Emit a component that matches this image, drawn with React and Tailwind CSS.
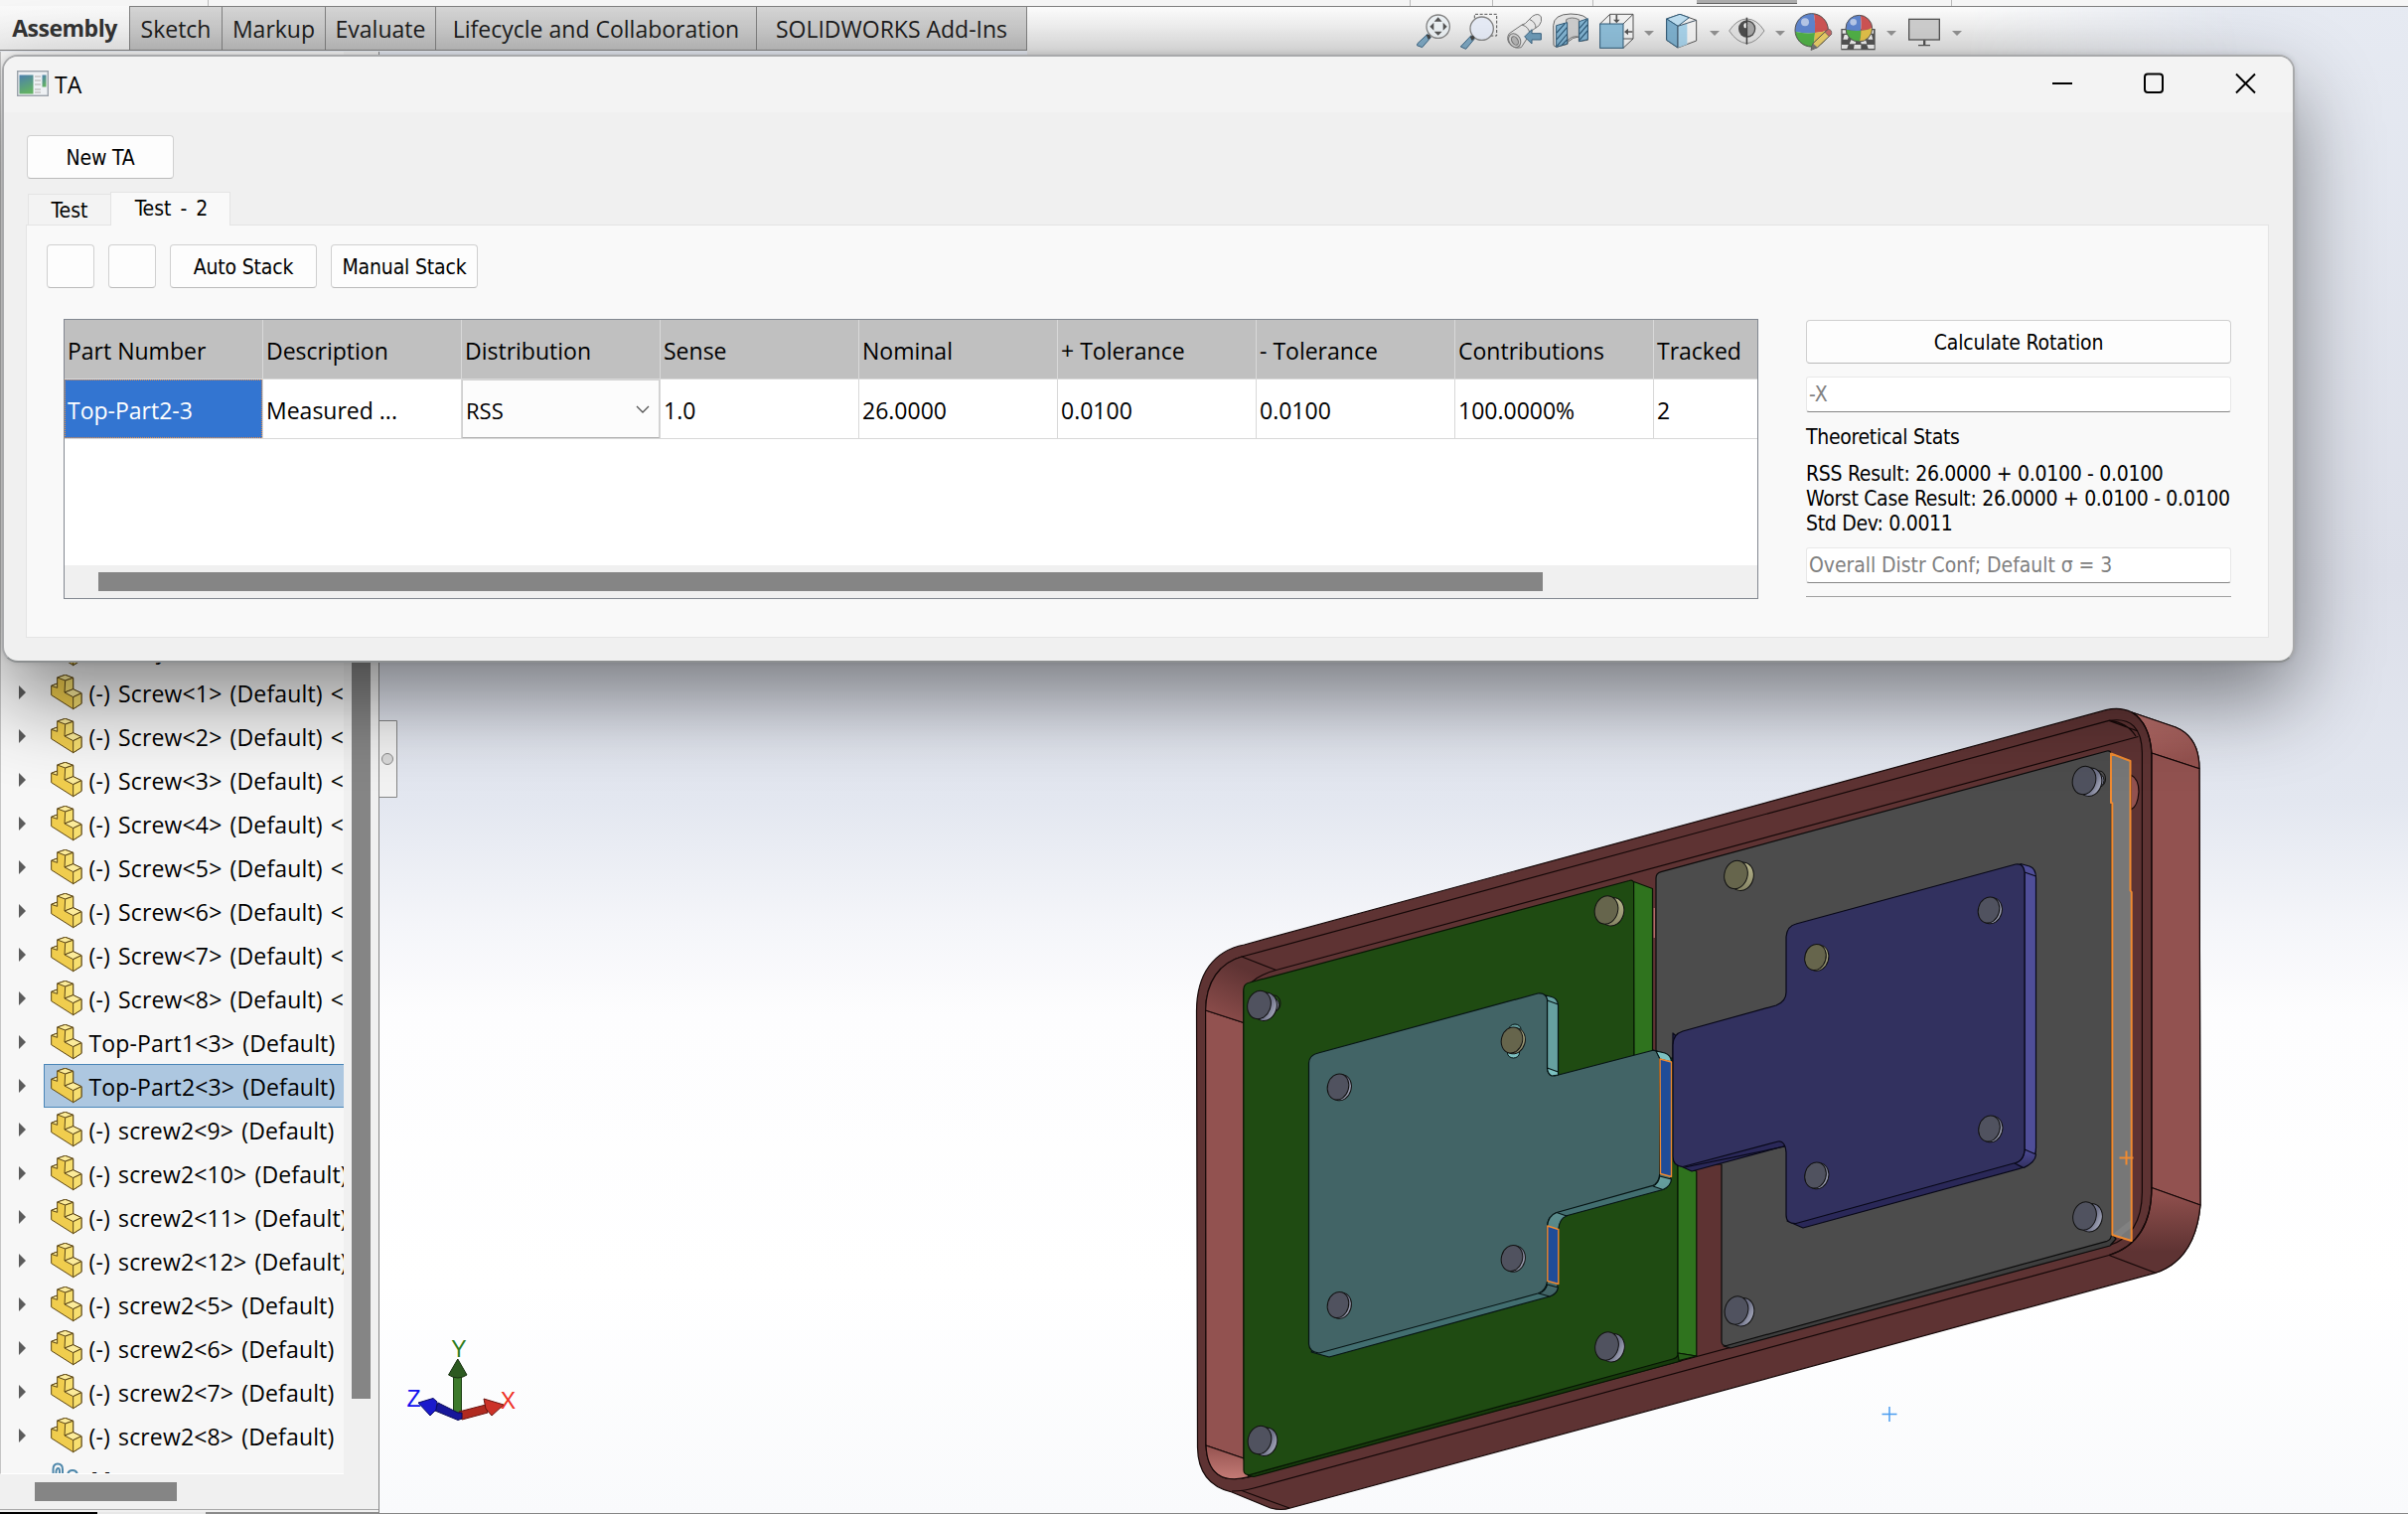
const SEGOE = "font-['Open_Sans','Noto_Sans',sans-serif]";
const TAHOMA = "font-['DejaVu_Sans_Condensed','DejaVu_Sans',sans-serif]";

const TREE = [
  "Battery<1> (Default)",
  "(-) Screw<1> (Default) <",
  "(-) Screw<2> (Default) <",
  "(-) Screw<3> (Default) <",
  "(-) Screw<4> (Default) <",
  "(-) Screw<5> (Default) <",
  "(-) Screw<6> (Default) <",
  "(-) Screw<7> (Default) <",
  "(-) Screw<8> (Default) <",
  "Top-Part1<3> (Default)",
  "Top-Part2<3> (Default)",
  "(-) screw2<9> (Default)",
  "(-) screw2<10> (Default)",
  "(-) screw2<11> (Default)",
  "(-) screw2<12> (Default)",
  "(-) screw2<5> (Default)",
  "(-) screw2<6> (Default)",
  "(-) screw2<7> (Default)",
  "(-) screw2<8> (Default)",
];

const COLUMNS = [
  ["Part Number", "Top-Part2-3"],
  ["Description", "Measured ..."],
  ["Distribution", "RSS"],
  ["Sense", "1.0"],
  ["Nominal", "26.0000"],
  ["+ Tolerance", "0.0100"],
  ["- Tolerance", "0.0100"],
  ["Contributions", "100.0000%"],
  ["Tracked", "2"],
];

function PartIcon() {
  return (
    <svg className="h-[36px] w-[32px] shrink-0" viewBox="0 0 96 108" strokeLinejoin="round" stroke="#5c4616" strokeWidth="3">
      <path d="M2 34 L20 27 L20 9 L44 1 L68 10 L68 44 L93 56 L93 88 L68 104 L2 62 Z" fill="#f0cd4e" />
      <path d="M20 9 L44 1 L68 10 L44 18 Z" fill="#fbeb9a" />
      <path d="M44 18 L68 10 L68 44 L42 54 Z" fill="#f7df70" />
      <path d="M42 54 L68 44 L93 56 L68 68 Z" fill="#fbeb9a" />
      <path d="M68 68 L93 56 L93 88 L68 104 Z" fill="#f7df70" />
      <path d="M2 34 L20 27 L20 40 Z" fill="#fbeb9a" />
    </svg>
  );
}

function TreeRow({ label, selected }) {
  return (
    <li className="flex h-[44px] items-stretch">
      <div className="flex w-[43px] shrink-0 items-center pb-px pl-[18px]">
        <svg className="h-[14px] w-[7px]" viewBox="0 0 7 14"><path d="M0 0 L7 7 L0 14 Z" fill="#5c5c5c" /></svg>
      </div>
      <div className={selected
        ? "flex flex-1 items-center border border-r-0 border-[#4a86b8] bg-[#adc7e0] pl-[6px]"
        : "flex flex-1 items-center pl-[7px]"}>
        <PartIcon />
        <span className="ml-[6.500px] pt-[2px] text-[23px] leading-[32px] tracking-[0.15px] [word-spacing:2px] whitespace-pre text-black">{label}</span>
      </div>
    </li>
  );
}

function Caret({ className }) {
  return (
    <svg className={"mt-[18px] h-[5px] w-[10px] shrink-0 " + className} viewBox="0 0 10 5"><path d="M0 0 H10 L5 5 Z" fill="#939393" /></svg>
  );
}

function ViewToolbar() {
  return (
    <div className="flex items-start pt-[6px]">
      <svg className="h-[38px] w-[34px] shrink-0" viewBox="33 40 102 114">
        <path d="M66 104 L76 114 L50 144 L34 138 L36 132 Z" fill="#7fa9c4" stroke="#3d6684" strokeWidth="3" />
        <circle cx="98" cy="81" r="35" fill="#eef3f6" stroke="#858585" strokeWidth="4" />
        <path d="M98 53 L110 66 H86 Z M98 108 L110 96 H86 Z M73 81 L85 69 V93 Z M125 81 L113 69 V93 Z" fill="#555" />
        <path d="M62 106 L72 106 L76 114 L68 120 Z" fill="#444" />
      </svg>
      <svg className="ml-[10px] h-[38px] w-[38px] shrink-0" viewBox="165 40 114 114">
        <path d="M208 70 V44 H275 V109 H240" fill="none" stroke="#555" strokeWidth="3" strokeDasharray="9 5" />
        <path d="M198 108 L208 118 L182 149 L166 142 Z" fill="#7fa9c4" stroke="#3d6684" strokeWidth="3" />
        <circle cx="230" cy="87" r="35" fill="#e9eef9" stroke="#858585" strokeWidth="4" />
        <path d="M194 112 L204 108 L209 116 L200 124 Z" fill="#444" />
      </svg>
      <svg className="ml-[9px] h-[38px] w-[36px] shrink-0" viewBox="307 40 108 114" stroke="#777" strokeWidth="3">
        <path d="M314 102 L352 76 L362 72 L384 50 Q402 38 410 52 Q414 66 404 78 L384 92 L376 104 L350 144 Q330 150 314 132 Q304 116 314 102 Z" fill="#ececec" />
        <path d="M352 76 Q374 82 376 104 M376 60 Q394 68 394 86" fill="none" />
        <ellipse cx="330" cy="123" rx="17" ry="22" transform="rotate(-30 330 123)" fill="#d8d8d8" />
        <ellipse cx="331" cy="124" rx="9" ry="14" transform="rotate(-30 331 124)" fill="#b8b8b8" />
        <path d="M360 112 L382 90 V102 H410 V121 H382 V133 Z" fill="#6f9dba" stroke="#3d6684" />
      </svg>
      <svg className="ml-[10px] h-[38px] w-[36px] shrink-0" viewBox="443 40 108 114" strokeWidth="3">
        <path d="M445 78 Q446 44 497 43 Q548 44 549 66 V122 L522 126 V112 Q505 112 488 128 V134 L454 143 L446 138 Z" fill="#e6e6e6" stroke="#666" />
        <path d="M484 72 V60 Q500 50 522 60 V112 Q500 108 488 124 Z" fill="#cfcfcf" stroke="#777" />
        <path d="M454 78 L487 69 V133 L454 143 Z M523 66 L549 57 V120 L523 126 Z" fill="#84b6d4" stroke="#2f5a78" />
        <path d="M455 100 L480 72 M455 120 L486 84 M456 140 L487 103 M470 138 L487 120 M524 86 L547 60 M524 104 L548 76 M524 122 L548 94" stroke="#2f5a78" strokeWidth="3.500" />
      </svg>
      <svg className="ml-[11px] h-[38px] w-[35px] shrink-0" viewBox="584 40 105 114" strokeWidth="3">
        <path d="M586 73 L616 44 H686 V118 L656 146 M656 73 L686 44 M616 44 V73 M656 118 H686" fill="#f4f4f4" stroke="#555" />
        <rect x="586" y="73" width="70" height="73" fill="#8fbfda" stroke="#2f5a78" />
        <path d="M636 46 V62 M684 97 H668" stroke="#555" strokeWidth="5" />
        <path d="M626 60 H646 L636 71 Z M671 87 V107 L659 97 Z" fill="#555" />
      </svg>
      <Caret className="ml-[10px]" />
      <svg className="ml-[12px] h-[38px] w-[32px] shrink-0" viewBox="0 40 96 114" strokeWidth="3" strokeLinejoin="round">
        <path d="M2 58 L42 44 L92 62 L92 124 L36 145 L2 122 Z" fill="#f4f4f4" stroke="#555" />
        <path d="M2 58 L42 44 L70 54 L36 80 Z" fill="#bfe0f2" stroke="#2f5a78" />
        <path d="M2 58 L36 80 V145 L2 122 Z" fill="#7fb2d0" stroke="#2f5a78" />
        <path d="M36 80 L64 71 V135 L36 145 Z" fill="#a9d4ec" stroke="none" />
        <path d="M36 80 L92 62 M36 80 V145" stroke="#456" fill="none" />
      </svg>
      <Caret className="ml-[12px]" />
      <svg className="ml-[9px] h-[38px] w-[37px] shrink-0" viewBox="152 40 111 114">
        <path d="M154 94 Q178 58 207 58 Q238 58 260 94 Q236 130 207 132 Q178 130 154 94 Z" fill="#e4e4e4" stroke="#909090" strokeWidth="3" />
        <circle cx="208" cy="88" r="26" fill="#4e4e4e" />
        <path d="M208 66 A21 21 0 0 1 208 110 Z" fill="#a8a8a8" />
        <ellipse cx="204" cy="78" rx="6" ry="8" fill="#fff" />
        <rect x="205" y="54" width="4.500" height="81" fill="#444" />
      </svg>
      <Caret className="ml-[10px]" />
      <svg className="ml-[9px] h-[38px] w-[39px] shrink-0" viewBox="347 40 117 114">
        <path d="M407 42 A50 50 0 0 0 350 96 Q380 104 410 100 Q412 70 407 42 Z" fill="#5f86cf" />
        <path d="M407 42 A50 50 0 0 1 450 92 Q430 100 410 100 Q412 70 407 42 Z" fill="#cf5454" />
        <path d="M350 96 A50 50 0 0 0 404 143 Q410 120 410 100 Q380 104 350 96 Z" fill="#52b248" />
        <path d="M410 100 Q430 100 450 92 A50 50 0 0 1 404 143 Q410 120 410 100 Z" fill="#e4c24a" />
        <circle cx="400" cy="92" r="50" fill="none" stroke="#555" strokeWidth="3" />
        <circle cx="380" cy="68" r="12" fill="#fff" opacity=".55" />
        <path d="M398 152 L404 132 L446 92 L460 104 L418 144 Z" fill="#ecd06a" stroke="#555" strokeWidth="3" />
        <path d="M440 98 L450 89 Q462 90 460 104 L453 111 Z" fill="#c96a6a" stroke="#555" strokeWidth="2" />
        <path d="M398 152 L404 132 L418 144 Z" fill="#777" />
      </svg>
      <svg className="ml-[8px] h-[38px] w-[35px] shrink-0" viewBox="489 40 105 114">
        <rect x="490" y="88" width="103" height="64" fill="#555" />
        <path d="M494 92 h12 v10 h-12 Z M576 92 h12 v10 h-12 Z M500 106 h14 l-4 14 h-14 Z M568 106 h14 l4 14 h-14 Z M520 122 h16 l-3 12 h-18 Z M548 122 h16 l4 12 h-17 Z M492 136 h20 l-4 12 h-16 Z M530 136 h20 v13 h-22 Z M568 136 h22 v12 h-18 Z" fill="#eee" />
        <path d="M549 47 A40 40 0 0 0 504 90 Q528 96 550 93 Q552 70 549 47 Z" fill="#5f86cf" />
        <path d="M549 47 A40 40 0 0 1 584 86 Q568 93 550 93 Q552 70 549 47 Z" fill="#cf5454" />
        <path d="M504 90 A40 40 0 0 0 546 127 Q550 110 550 93 Q528 96 504 90 Z" fill="#52b248" />
        <path d="M550 93 Q568 93 584 86 A40 40 0 0 1 546 127 Q550 110 550 93 Z" fill="#e4c24a" />
        <circle cx="544" cy="87" r="40" fill="none" stroke="#555" strokeWidth="3" />
        <circle cx="527" cy="68" r="10" fill="#fff" opacity=".55" />
      </svg>
      <Caret className="ml-[11px]" />
      <svg className="ml-[12px] h-[38px] w-[32px] shrink-0" viewBox="693 40 96 114">
        <rect x="695" y="59" width="92" height="62" fill="#cfcfcf" stroke="#555" strokeWidth="4" />
        <path d="M738 122 h7 v14 h14 v4 h-36 v-4 h15 Z" fill="#555" />
      </svg>
      <Caret className="ml-[12px]" />
    </div>
  );
}

function Screw({ x, y, big, tan, slot }) {
  const rx = big ? 11.6 : 10.6;
  const ry = big ? 14.4 : 13.2;
  const dx = big ? 6 : 2.6;
  const dy = big ? 1.8 : 0.8;
  const side = tan ? "url(#tanSide)" : "url(#steelSide)";
  const face = tan ? "#66654c" : "#50525f";
  return (
    <g stroke="#111" strokeWidth="1">
      {slot && <ellipse cx={x + 15.5} cy={y - 1.5} rx="6" ry="8" fill={slot} />}
      {slot && <ellipse cx={x + 14} cy={y} rx="6" ry="7" fill="#80839a" />}
      <ellipse cx={x + dx} cy={y + dy} rx={rx} ry={ry} transform={`rotate(16 ${x + dx} ${y + dy})`} fill={side} />
      <ellipse cx={x} cy={y} rx={rx} ry={ry} transform={`rotate(16 ${x} ${y})`} fill={face} />
    </g>
  );
}

function Model() {
  return (
    <svg className="block h-[1472px] w-[2042px]" viewBox="382 52 2042 1472" strokeLinejoin="round">
      <defs>
        <linearGradient id="steelSide" x1="0" y1="0" x2="1" y2=".2"><stop offset=".7" stopColor="#70738a" /><stop offset="1" stopColor="#9a9db0" /></linearGradient>
        <linearGradient id="tanSide" x1="0" y1="0" x2="0" y2="1"><stop offset="0" stopColor="#b5b38a" /><stop offset="1" stopColor="#838162" /></linearGradient>
        <linearGradient id="sideTop" x1="0" y1="0" x2="0.3" y2="1"><stop offset="0" stopColor="#c07470" /><stop offset="1" stopColor="#94524f" /></linearGradient>
        <linearGradient id="sideBottom" x1="0" y1="0" x2="0" y2="1"><stop offset="0" stopColor="#94524f" /><stop offset=".75" stopColor="#5e3333" /></linearGradient>
        <linearGradient id="wallTop" x1="0.2" y1="1" x2="0.6" y2="0.2"><stop offset="0" stopColor="#8e4e4c" /><stop offset="1" stopColor="#5e3333" /></linearGradient>
        <linearGradient id="wallBottom" x1="0" y1="0" x2="0" y2="1"><stop offset="0" stopColor="#94524f" /><stop offset="1" stopColor="#c47b76" /></linearGradient>
        <linearGradient id="tealEdge" x1="0" y1="0" x2="0" y2="1"><stop offset="0" stopColor="#66a0a0" /><stop offset="1" stopColor="#426466" /></linearGradient>
        <linearGradient id="navyEdge" x1="0" y1="0" x2="0" y2="1"><stop offset="0" stopColor="#4c4a96" /><stop offset="1" stopColor="#32305f" /></linearGradient>
      </defs>

      {/* housing */}
      <g stroke="#150808" strokeWidth="1.200">
        <path d="M1204.500 1018 C1204.500 980 1222 957 1252.500 951 L2120 714.700 Q2134 711 2146 717 L2190 732 Q2214 742 2214 773.700 L2215 1213 Q2210 1268 2169.800 1281.300 L1299 1518 Q1290 1521 1279 1518 L1240 1502 Q1206 1494 1205.500 1457 Z" fill="#5e3333" />
        <path d="M2146 717 L2190 732 Q2214 742 2214 773.700 L2165.900 758 Q2164 728 2146 717 Z" fill="url(#sideTop)" />
        <path d="M2165.900 758 L2214 773.700 L2215 1213 L2165.900 1195.500 Z" fill="#925250" />
        <path d="M2165.900 1195.500 L2215 1213 Q2210 1268 2169.800 1281.300 L2123 1263.500 Q2166 1250 2165.900 1195.500 Z" fill="url(#sideBottom)" />
        <path d="M1240 1501 Q1252 1501 1262 1498 L2123 1263.500 Q2166 1250 2165.900 1195.500 L2165.900 758 Q2164 728 2146 717" fill="none" />
        <path d="M1250 1500.500 L1298 1518" />
        <path d="M1213.600 1017 C1214 988 1228 969 1250 963 L2123 725.400 Q2156 720 2156.400 758 L2156.400 1200 Q2156 1244 2123 1253.600 L1257.900 1486.700 Q1216 1497 1214 1455 Z" fill="#5e3333" />
        <path d="M1213.600 1017 L1252 1029.500 L1252 1468 L1214 1455 Z" fill="#925250" />
        <path d="M1213.600 1017 C1214 988 1228 969 1250 963 L1284.600 976.500 Q1262 982 1252 998 L1252 1029.500 Z" fill="url(#wallTop)" />
        <path d="M1214 1455 L1252 1468 L1257 1486.700 Q1216 1497 1214 1455 Z" fill="url(#wallBottom)" />
        <path d="M1284.600 976.500 L2152.400 741.500 M2123 725.400 L2152 736 M2123 725.400 Q2141 727 2150 741" fill="none" />
        <path d="M2145 780 Q2153 784 2153 797 Q2152 812 2145 815 Z" fill="#925250" />
      </g>

      {/* grey plate */}
      <g stroke="#0c0c0c" strokeWidth="1.200">
        <path d="M1735 1355 L1742 1357 L2124 1254 L2130 1247 L2124 1240 Z" fill="#3e3e3e" />
        <path d="M1667 884 Q1667 879 1672 877.700 L2121 756 Q2125 755 2125.500 760 L2125.500 1243 Q2125 1248 2121 1249.300 L1738 1354.500 Q1733 1355 1733 1350 L1733 1172 L1667 1172 Z" fill="#4c4c4c" />
        <path d="M1664.500 914 v30 h1.500 v-30 Z" fill="#b06a66" stroke="none" />
      </g>

      {/* green plate */}
      <g stroke="#071604" strokeWidth="1.200">
        <path d="M1256 1485 L1262 1486.500 L1692 1370 L1689 1364 Z" fill="#173a0c" />
        <path d="M1251.800 996 Q1252 990 1258 989 L1640 886.500 Q1645 885 1645 891 L1645 1065 L1689 1065 L1689 1364 Q1688 1367 1684 1368 L1258 1484.500 Q1252 1485 1252 1480 Z" fill="#1f4b12" />
        <path d="M1644.600 887.500 L1663.500 894.500 L1663.500 1062 L1645 1066 Z M1689 1172 L1707.800 1179 L1707.800 1365 L1689 1362 Z" fill="#2f731e" />
        <path d="M1689 1362 L1707.800 1365 L1690 1369.500 Z" fill="#265f18" />
      </g>

      {/* navy bracket */}
      <g stroke="#080818" strokeWidth="1.200">
        <path d="M1684 1040 Q1683.500 1168 1690 1173 L1703 1179 L1797 1153.500 L1797 1140 Z M1799 1229 L1815 1236 L2036 1175.500 Q2049 1170 2049.500 1155 L2030 1160 Z" fill="#2a2858" />
        <path d="M2034 869.500 L2043 872 Q2049.500 874 2049.500 884 L2049.500 1155 Q2049 1170 2037 1175.500 L2030 1171 L2038 1160 V880 Z" fill="#4f4e98" />
        <path d="M2038 1157 L2049.500 1162 Q2049 1170 2037 1175.500 L2028 1171 Q2038 1168 2038 1157 Z" fill="url(#navyEdge)" />
        <path d="M2038 878 L2049.500 882" />
        <path d="M1684 1052 Q1684 1041 1694 1038 L1788 1012 Q1798 1008 1798 999 V943 Q1799 932 1808 930 L2029 870 Q2037 868.500 2038 878 V1158 Q2037 1168 2029 1170.500 L1808 1231.500 Q1798 1232 1798 1223 V1160 Q1797 1148 1790 1149 L1694 1174.500 Q1684 1174 1684 1164 Z" fill="#32315f" />
        <path d="M1696 1175 L1797 1154" fill="none" />
      </g>

      {/* teal bracket */}
      <g stroke="#061414" strokeWidth="1.200">
        <path d="M1552 1001 L1562 1003.500 Q1568 1005 1568.500 1012 V1081 L1565 1083 L1557.500 1076 V1006 Z" fill="#66a0a0" />
        <path d="M1664 1057 L1675 1060 Q1682 1062 1682.500 1070 V1180 Q1682 1194 1674 1197.500 L1576 1224 Q1570 1226 1568.500 1236 V1290 Q1568 1302 1560 1305 L1338 1366 L1320 1361 Z" fill="#426e70" />
        <path d="M1317.500 1070 Q1318 1062 1327 1060 L1548 1000 Q1556 999 1557.500 1006 V1076 Q1558 1083 1565 1083 L1663 1057.500 Q1669.500 1056 1670.700 1065 V1182 Q1670 1191 1663 1193.700 L1567 1220.500 Q1558 1224 1557.500 1235 V1290 Q1556 1299.500 1548 1302 L1328 1362 Q1318 1361 1317.500 1353 Z" fill="#426466" />
        <path d="M1670.700 1184 L1682.500 1187 Q1682 1194 1674 1197.500 L1664 1194 Q1670 1191 1670.700 1184 Z M1557.500 1293 L1568.500 1296 Q1567 1303 1560 1305 L1549 1302 Q1556 1299.500 1557.500 1293 Z M1557.500 1235 L1568.500 1238 Q1570 1226 1577 1224 L1567 1220.500 Q1558 1224 1557.500 1235 Z" fill="url(#tealEdge)" />
        <path d="M1667 1058 L1676 1060 Q1682 1062 1682.500 1069 L1671 1066 Z M1557.500 1075 L1568.500 1079 V1082 L1562 1083 Q1558 1081 1557.500 1075 Z" fill="#7cc0c0" />
        <path d="M1557.500 1007 L1568.500 1011" />
        <path d="M1671 1066 L1682.500 1069 V1184.500 L1671.500 1181.500 Z M1557.800 1234 L1568.800 1237.500 V1292.500 L1557.800 1289.500 Z" fill="#1f4c98" stroke="#f08a30" strokeWidth="1.400" />
      </g>

      {/* preselected face */}
      <path d="M2125 758.500 L2144.500 766 V896.500 L2145.700 898 V1249 L2126.300 1243 V808.500 L2125 808 Z" fill="#777777" stroke="#f08a30" strokeWidth="2" />
      <path d="M2127 1242 L2145 1228 L2145 1236 L2134 1245 Z" fill="#a0a0a0" opacity=".25" />

      <Screw x={1267.5} y={1011.5} big slot="#1f4b12" />
      <Screw x={1617} y={916} big tan />
      <Screw x={1268} y={1449.5} big />
      <Screw x={1617.5} y={1355} big />
      <ellipse cx="1525" cy="1036" rx="6" ry="5" fill="#66a0a0" stroke="#061414" />
      <ellipse cx="1523.500" cy="1060" rx="6" ry="5" fill="#7cc0c0" stroke="#061414" />
      <Screw x={1347} y={1094} />
      <Screw x={1522} y={1047} tan />
      <Screw x={1522} y={1266.5} />
      <Screw x={1347} y={1313.5} />
      <Screw x={1747.5} y={880.5} big tan />
      <Screw x={2098} y={785.5} big slot="#4c4c4c" />
      <Screw x={2098.5} y={1224} big />
      <Screw x={1748} y={1319} big />
      <Screw x={2002} y={916} />
      <Screw x={1827.5} y={963.5} tan />
      <Screw x={2002.5} y={1136} />
      <Screw x={1827.5} y={1183} />

      <path d="M2133.500 1165.500 h14 M2140.500 1158.500 v14" stroke="#f08a30" strokeWidth="2" />
      <path d="M1894.500 1423.500 h15 M1902 1416 v15" stroke="#4a9cf0" strokeWidth="1.500" />

      {/* coordinate triad */}
      <path d="M456.500 1384 h8 v40 h-8 Z" fill="#3d7a2c" stroke="#1d4015" />
      <path d="M460.800 1368 L470 1384 Q461 1390 451.500 1384 Z" fill="#2c5a20" stroke="#16300f" />
      <path d="M462 1421 L489 1414 L491 1422 L465 1429 Z" fill="#b02a20" stroke="#6a1410" />
      <path d="M507 1414 L487 1408 L489 1418 L495 1425 Z" fill="#cc3228" stroke="#6a1410" />
      <path d="M461 1422 L441 1412 L438 1420 L461 1429.500 L465 1428 V1422 Z" fill="#17179a" stroke="#0a0a55" />
      <path d="M421 1412 L436 1407.500 L440 1411 L439 1419 L433 1425 Z" fill="#1a1acc" stroke="#0a0a66" />
      <g className="font-['Liberation_Sans',sans-serif]" fontSize="23" textAnchor="middle">
        <text x="462" y="1366" fill="#2e7d1e">Y</text>
        <text x="416.500" y="1416" fill="#1010ee">Z</text>
        <text x="511.500" y="1418" fill="#ee3024">X</text>
      </g>

      {/* panel splitter handle */}
      <path d="M381 725.500 H399.500 V802.500 H381 Z" fill="#f2f2f2" stroke="#858585" />
      <circle cx="390" cy="764" r="5.500" fill="#d8d8d8" stroke="#8a8a8a" />
    </svg>
  );
}

function PushButton({ children, className }) {
  return (
    <button className={"flex items-center justify-center rounded-[4px] border border-[#d0d0d0] border-b-[#bababa] bg-[#fdfdfd] pt-[3px] text-[21px] tracking-[-0.15px] text-black " + className}>
      {children}
    </button>
  );
}

function StackTable() {
  return (
    <div className={"flex h-[282px] w-[1706px] flex-col overflow-hidden border border-[#828790] bg-white text-[23px] text-black " + SEGOE}>
      <div className="flex h-[60px] shrink-0 border-b border-[#d8d8d8] bg-[#c0c0c0]">
        {COLUMNS.map(([head]) => (
          <div key={head} className="flex w-[200px] shrink-0 items-center border-r border-[#d8d8d8] pt-[3px] pl-[3px] whitespace-pre">{head}</div>
        ))}
      </div>
      <div className="flex h-[60px] shrink-0 border-b border-[#d8d8d8]">
        {COLUMNS.map(([head, value], i) => (
          <div key={head} className="flex w-[200px] shrink-0 border-r border-[#d8d8d8]">
            {i === 0 && <div className="flex flex-1 items-center border border-dotted border-[#f09040] bg-[#3375d1] pt-[3px] pl-[2px] text-white">{value}</div>}
            {i === 2 && (
              <div className="flex flex-1 items-center justify-between border border-[#d0d0d0] border-b-[#b0b0b0] bg-[#fcfcfc] pr-[9px] pl-[3px]">
                <span className="pt-[3px] text-[22px]">{value}</span>
                <svg className="h-[8px] w-[14px]" viewBox="0 0 14 8"><path d="M1 1 L7 7 L13 1" fill="none" stroke="#555" strokeWidth="1.300" /></svg>
              </div>
            )}
            {i !== 0 && i !== 2 && <div className="flex flex-1 items-center pt-[3px] pl-[3px] whitespace-pre">{value}</div>}
          </div>
        ))}
      </div>
      <div className="flex-1" />
      <div className="flex h-[33px] shrink-0 items-center bg-[#f0f0f0] pl-[34px]">
        <div className="h-[19px] w-[1454px] bg-[#858585]" />
      </div>
    </div>
  );
}

function Field({ children }) {
  return (
    <div className="flex h-[36px] items-center rounded-[3px] border border-[#e8e8e8] border-b-[#858585] bg-white pt-[2px] pl-[2px] text-[21px] tracking-[-0.05px] whitespace-pre text-[#808080]">{children}</div>
  );
}

function Dialog() {
  return (
    <div className={"absolute top-[55px] left-[2px] flex h-[612px] w-[2308px] flex-col overflow-hidden rounded-[16px] border-2 border-[#a8a9ab] border-b-[#8c8f90] bg-[#f0f0f0] shadow-[0_36px_84px_rgba(0,0,0,0.46),0_0_6px_rgba(0,0,0,0.12)] " + TAHOMA}>
      <div className="flex h-[56px] shrink-0 items-center bg-[#f3f3f3] pl-[13px]">
        <svg className="mt-[-2px] h-[26px] w-[32px]" viewBox="0 0 32 26">
          <defs><linearGradient id="winIcon" x1="0" y1="0" x2="0.3" y2="1"><stop offset="0" stopColor="#4b7fae" /><stop offset="1" stopColor="#62b065" /></linearGradient></defs>
          <rect x=".7" y=".7" width="30.600" height="24.600" fill="#eef1f4" stroke="#9aa2aa" strokeWidth="1.400" />
          <rect x="2.500" y="4.500" width="14" height="19" fill="url(#winIcon)" />
          <path d="M18 5h6v2h-6zM18 9h6v2h-6zM18 13h6v2h-6zM18 18h6v2h-6zM18 21h6v2h-6z" fill="#cfcfcf" />
          <rect x="25.500" y="4.500" width="4" height="12" fill="url(#winIcon)" />
        </svg>
        <span className={"ml-[6px] flex-1 text-[23px] text-black " + SEGOE}>TA</span>
        <svg className="mt-[-2px] h-[22px] w-[208px]" viewBox="0 0 208 22" fill="none" stroke="#000" strokeWidth="2">
          <path d="M1 11 h20" />
          <rect x="94" y="1.500" width="18" height="18.500" rx="3" />
          <path d="M186 1.500 L205 20.500 M205 1.500 L186 20.500" />
        </svg>
        <div className="w-[35px]" />
      </div>
      <div className="flex flex-1 flex-col pr-[24px] pl-[22px]">
        <PushButton className="mt-[23px] ml-[1px] h-[44px] w-[148px] shrink-0">New TA</PushButton>
        <div className="mt-[13px] ml-[2px] flex h-[33px] shrink-0 items-end text-[21px] text-black">
          <div className="flex h-[31px] w-[83px] items-center justify-center border border-r-0 border-b-0 border-[#e4e4e4] bg-[#f3f3f3] pt-[3px]">Test</div>
          <div className="z-10 -mb-px flex h-[34px] w-[121px] items-center justify-center border border-b-0 border-[#e4e4e4] bg-[#f9f9f9] pt-[1px] pl-[2px] [word-spacing:3px]">Test - 2</div>
        </div>
        <div className="h-[416px] shrink-0 border border-[#e4e4e4] bg-[#f9f9f9]">
          <div className="flex pt-[19px] pl-[20px]">
            <PushButton className="h-[44px] w-[48px]" />
            <PushButton className="ml-[14px] h-[44px] w-[48px]" />
            <PushButton className="ml-[14px] h-[44px] w-[148px]">Auto Stack</PushButton>
            <PushButton className="ml-[14px] h-[44px] w-[148px]">Manual Stack</PushButton>
          </div>
          <div className="mt-[31px] flex pl-[37px]">
            <StackTable />
            <div className="ml-[48px] flex w-[428px] flex-col pt-px text-[21px] text-black">
              <PushButton className="h-[44px] w-full">Calculate Rotation</PushButton>
              <div className="mt-[13px]"><Field>-X</Field></div>
              <div className="mt-[13px] leading-[25px] tracking-[-0.3px]">Theoretical Stats</div>
              <div className="mt-[12px] leading-[25px] tracking-[-0.3px] whitespace-nowrap">
                <div>RSS Result: 26.0000 + 0.0100 - 0.0100</div>
                <div>Worst Case Result: 26.0000 + 0.0100 - 0.0100</div>
                <div>Std Dev: 0.0011</div>
              </div>
              <div className="mt-[11px]"><Field>Overall Distr Conf; Default σ = 3</Field></div>
              <div className="mt-[13px] h-px bg-[#a0a0a0]" />
            </div>
          </div>
        </div>
      </div>
    </div>
  );
}

function Tab({ children, className }) {
  return (
    <div className={"flex h-[45px] items-center justify-center border border-l-0 border-[#808080] bg-linear-to-b from-[#d6d6d6] to-[#bdbdbd] pt-[1px] whitespace-pre " + className}>{children}</div>
  );
}

export default function App() {
  return (
    <div className={"relative flex h-[1524px] w-[2424px] flex-col overflow-hidden bg-[linear-gradient(to_bottom,#e6eaf2_0%,#dcdfe9_38%,#e3e7f0_53%,#f4f5f9_61%,#fdfdfe_67%,#ffffff_85%,#f9fafc_100%)] " + SEGOE}>
      <div className="flex h-[6px] shrink-0 bg-[#f6f6f6]">
        <div className="w-[210px] border-r border-[#bbb]" />
        <div className="w-[1210px] border-r border-[#bbb]" />
        <div className="w-[83px] border-r border-[#bbb]" />
        <div className="w-[101px] border-r border-[#bbb]" />
        <div className="ml-[104px] h-[4px] w-[101px] border-b border-[#666] bg-[#adadad]" />
        <div className="w-[156px] border-r border-[#bbb]" />
      </div>
      <div className="flex h-[46px] shrink-0 text-[23px] text-[#1c1c1c]">
        <div className="flex h-[45px] w-[131px] items-center justify-center border-r border-b border-[#808080] bg-linear-to-b from-[#fafafa] to-[#ececec] pt-[1px] font-bold tracking-[-0.5px] text-[#333]">Assembly</div>
        <Tab className="w-[93px]">Sketch</Tab>
        <Tab className="w-[104px]">Markup</Tab>
        <Tab className="w-[111px]">Evaluate</Tab>
        <Tab className="w-[323px]">Lifecycle and Collaboration</Tab>
        <Tab className="w-[272px]">SOLIDWORKS Add-Ins</Tab>
        <div className="flex h-[50px] flex-1 border-t border-[#808080]">
          <div className="h-[49px] w-full bg-linear-to-b from-[#fdfdfd] to-[#dfdfdf] pl-[392px] [mask-image:linear-gradient(to_right,black_68%,transparent_88%)]">
            <ViewToolbar />
          </div>
        </div>
      </div>
      <div className="flex h-[1472px] shrink-0">
        <aside className="flex h-[1472px] w-[382px] shrink-0 flex-col border-r border-[#858585] bg-[#f0f0f0]">
          <div className="flex h-[1432px] shrink-0">
            <ul className="w-[346px] shrink-0 overflow-hidden border-b border-l border-b-white border-l-[#c4c4c4] bg-[#f7f7f7] pt-[579px]">
              {TREE.map((label) => (
                <TreeRow key={label} label={label} selected={label === "Top-Part2<3> (Default)"} />
              ))}
              <li className="flex h-[44px] items-start pt-[5px] pl-[51px]">
                <svg className="h-[32px] w-[30px] shrink-0" viewBox="0 0 30 32" fill="none" stroke="#4f88ab" strokeWidth="2">
                  <path d="M1.500 32 V7 Q1.500 1.500 6 1.500 Q11 1.500 11 7 V32 M4.500 32 V9 Q5 6 6.500 6 Q8 6 8 9 V32" />
                  <path d="M16 32 V14 Q16 8 21 8 Q26 8 26 14 V32 M19 32 V14 Q20 12 21 12 Q23 12 23 14 V32" />
                </svg>
                <span className="ml-[9px] pt-[2px] text-[23px] leading-[32px] font-semibold">Mates</span>
              </li>
            </ul>
            <div className="flex flex-1 justify-start pt-[8px] pl-[8px]">
              <div className="h-[1348px] w-[19px] bg-[#858585]" />
            </div>
          </div>
          <div className="flex h-[36px] shrink-0 items-center border-b border-[#a8a8a8] pl-[35px]">
            <div className="h-[19px] w-[143px] bg-[#858585]" />
          </div>
          <div className="mt-[2px] flex h-[2px]">
            <div className="w-[98px] bg-black" />
            <div className="w-[109px] bg-[#e8e8e8]" />
            <div className="flex-1 bg-[#8a8a8a]" />
          </div>
        </aside>
        <section className="flex-1 border-b border-[#858585]">
          <Model />
        </section>
      </div>
      <Dialog />
    </div>
  );
}
